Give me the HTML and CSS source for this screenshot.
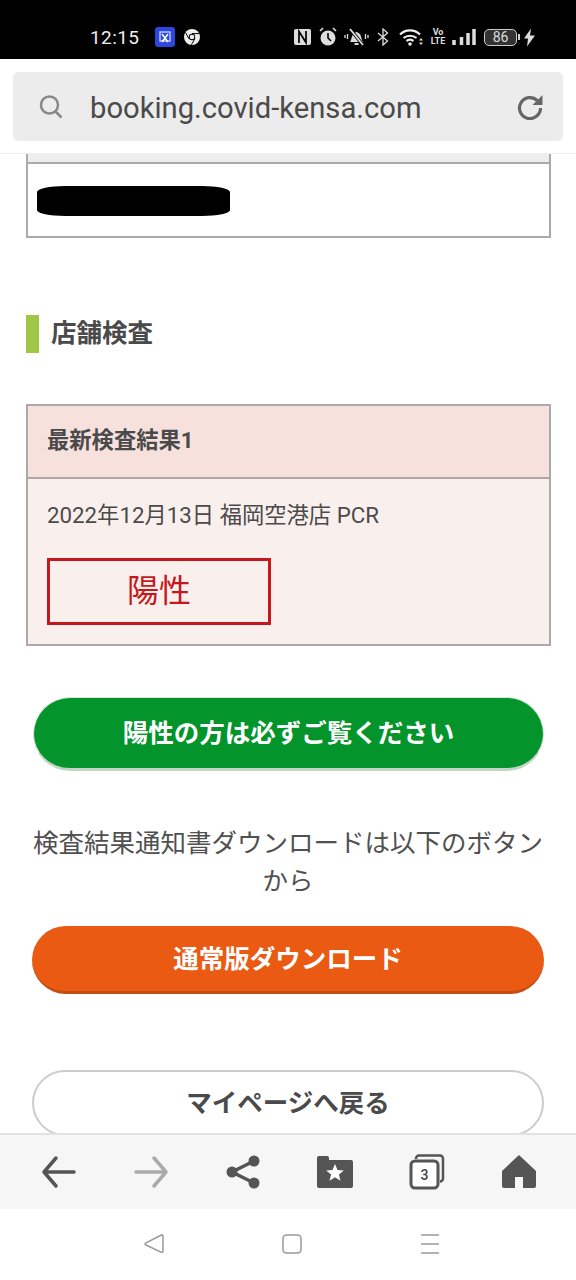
FILE: index.html
```
<!DOCTYPE html>
<html lang="ja">
<head>
<meta charset="utf-8">
<title>booking.covid-kensa.com</title>
<link rel="stylesheet" href="styles.css">
</head>
<body>
<div class="phone">
  <header class="status">
    <div class="status-left">
      <span class="clock">12:15</span>
      <svg class="app-icon" width="20" height="20" viewBox="0 0 20 20"><rect width="20" height="20" rx="3" fill="#2b47e0"/><rect x="5" y="5" width="10" height="9" fill="none" stroke="#cdd5ff" stroke-width="1.300"/><path d="M7 15l6-8M13 15L7 7" stroke="#fff" stroke-width="1.500" fill="none"/></svg>
      <svg class="chrome-icon" width="16" height="16" viewBox="0 0 16 16"><circle cx="8" cy="8" r="8" fill="#eee"/><circle cx="8" cy="8" r="3.200" fill="#000"/><circle cx="8" cy="8" r="2.300" fill="#eee"/><path d="M8 4.600h7M5 9.800L1.600 3.600M10.900 9.600L7.400 15.800" stroke="#000" stroke-width="1"/></svg>
    </div>
    <div class="status-right">
      <svg width="17" height="18" viewBox="0 0 17 18"><rect x="0" y="1" width="17" height="16" rx="2" fill="#ddd"/><path d="M5 15V3.500l7 11V3" fill="none" stroke="#000" stroke-width="1.700"/></svg>
      <svg width="18" height="20" viewBox="0 0 18 20"><circle cx="9" cy="11" r="7.500" fill="#ddd"/><path d="M9 6v5l3 3" fill="none" stroke="#000" stroke-width="1.600"/><path d="M1 4l3-3M17 4l-3-3" stroke="#ddd" stroke-width="1.600"/></svg>
      <svg class="ic-bell" width="25" height="20" viewBox="0 0 25 20"><path d="M6 15c2-2 1-9 6.500-10 5.500 1 4.500 8 6.500 10z" fill="#ddd"/><path d="M10.500 17h4" stroke="#ddd" stroke-width="2"/><path d="M6 2l13 16" stroke="#000" stroke-width="3.500"/><path d="M6 2l13 16" stroke="#ddd" stroke-width="1.800"/><path d="M1 8v3M3.500 7v5M21.500 7v5M24 8v3" stroke="#ddd" stroke-width="1.300"/></svg>
      <svg width="12" height="18" viewBox="0 0 12 18"><path d="M1 5l9.500 8L6 17V1l4.500 4L1 13" fill="none" stroke="#ddd" stroke-width="1.300"/></svg>
      <svg class="ic-wifi" width="25" height="18" viewBox="0 0 25 18"><path d="M1 6.500C6.500 1 15.500 1 21 6.500M4.500 10c3.500-3 9.500-3 13 0M7.500 13c2-1.500 5-1.500 7 0" fill="none" stroke="#eee" stroke-width="2.200"/><circle cx="11" cy="16" r="1.800" fill="#eee"/><path d="M22 10l-2 2.500h4zM22 17l-2-2.500h4z" fill="#ddd"/></svg>
      <span class="volte">Vo<br>LTE</span>
      <svg width="24" height="16" viewBox="0 0 24 16"><path d="M2 16v-5M9.500 16V8M16 16V4M22 16V0" stroke="#ddd" stroke-width="3.500"/></svg>
      <span class="battery"><span class="battery-level">86</span></span>
      <svg class="bolt" width="11" height="19" viewBox="0 0 11 18"><path d="M7 0L0 10h4l-1 8 8-11H6z" fill="#ddd"/></svg>
    </div>
  </header>

  <div class="address">
    <div class="url-pill">
      <svg width="26" height="26" viewBox="0 0 26 26"><circle cx="11.500" cy="11" r="8.500" fill="none" stroke="#888" stroke-width="2.500"/><path d="M17.500 17.500l6 6" stroke="#888" stroke-width="2.500"/></svg>
      <span class="url">booking.covid-kensa.com</span>
      <svg class="reload" width="26" height="26" viewBox="0 0 26 26"><path d="M23.500 14a10.500 10.500 0 1 1-3.200-7.500" fill="none" stroke="#666" stroke-width="3.200"/><path d="M25.500 1v10h-10z" fill="#666"/></svg>
    </div>
  </div>

  <main class="content">
    <div class="info-table">
      <div class="info-head"></div>
      <div class="info-cell"><div class="redaction"></div></div>
    </div>

    <h2 class="section-title">店舗検査</h2>

    <section class="result">
      <h3 class="result-head">最新検査結果1</h3>
      <div class="result-body">
        <p class="result-date">2022年12月13日 福岡空港店 PCR</p>
        <div class="result-badge">陽性</div>
      </div>
    </section>

    <a class="btn btn-green">陽性の方は必ずご覧ください</a>
    <p class="note">検査結果通知書ダウンロードは以下のボタンから</p>
    <a class="btn btn-orange">通常版ダウンロード</a>
    <a class="btn btn-white">マイページへ戻る</a>
  </main>

  <nav class="toolbar">
    <svg width="36" height="36" viewBox="0 0 36 36"><path d="M33 18H4M15 4L3 18l12 14" fill="none" stroke="#555" stroke-width="3.500" stroke-linecap="round" stroke-linejoin="round"/></svg>
    <svg width="36" height="36" viewBox="0 0 36 36"><path d="M3 18h29M21 4l12 14-12 14" fill="none" stroke="#aaa" stroke-width="3.500" stroke-linecap="round" stroke-linejoin="round"/></svg>
    <svg width="36" height="36" viewBox="0 0 36 36"><path d="M29 7L7 18l22 11" fill="none" stroke="#555" stroke-width="3.500"/><circle cx="29" cy="7" r="5.500" fill="#555"/><circle cx="7" cy="18" r="5.500" fill="#555"/><circle cx="29" cy="29" r="5.500" fill="#555"/></svg>
    <svg width="36" height="36" viewBox="0 0 36 36"><path d="M0 4a2 2 0 0 1 2-2h8a2 2 0 0 1 2 2v2h22a2 2 0 0 1 2 2v24a2 2 0 0 1-2 2H2a2 2 0 0 1-2-2z" fill="#555"/><path d="M18 10l2.500 6 6.300.4-4.900 4.100 1.600 6.200-5.500-3.400-5.500 3.400 1.600-6.200-4.900-4.100 6.300-.4z" fill="#fff"/></svg>
    <svg class="tabs-icon" width="36" height="36" viewBox="0 0 36 36"><rect x="2" y="7" width="27" height="27" rx="4" fill="#fff" stroke="#555" stroke-width="3"/><path d="M7 5V4.500a3 3 0 0 1 3-3h21a3 3 0 0 1 3 3v20a3 3 0 0 1-3 3" fill="none" stroke="#555" stroke-width="2.500"/><text x="15.500" y="26" class="tabs-count">3</text></svg>
    <svg width="36" height="36" viewBox="0 0 36 36"><path d="M18 1L1 17v15a2 2 0 0 0 2 2h11V23h8v11h11a2 2 0 0 0 2-2V17z" fill="#555"/></svg>
  </nav>

  <footer class="sysnav">
    <svg width="22" height="22" viewBox="0 0 22 22"><path d="M20 2.500v16a1 1 0 0 1-1.500.8L2.500 11.800a1 1 0 0 1 0-1.600L18.500 2a1 1 0 0 1 1.500.5z" fill="none" stroke="#999" stroke-width="1.500"/></svg>
    <svg width="22" height="22" viewBox="0 0 22 22"><rect x="2" y="2" width="18" height="18" rx="3.500" fill="none" stroke="#999" stroke-width="1.500"/></svg>
    <svg width="22" height="22" viewBox="0 0 22 22"><path d="M2 2h18M2 11h18M2 20h18" stroke="#999" stroke-width="1.500"/></svg>
  </footer>
</div>
</body>
</html>
```
FILE: styles.css
```
* { box-sizing: border-box; }
html, body { margin: 0; padding: 0; background: #fff; }
body { font-family: Roboto, "Noto Sans CJK JP", sans-serif; color: #4a4a4a; }

.phone { width: 576px; height: 1280px; display: flex; flex-direction: column; overflow: hidden; }

.status { flex: 0 0 59px; background: #000; color: #eee; display: flex; justify-content: space-between; align-items: center; padding: 15px 41px 0 90px; }
.status-left { display: flex; align-items: center; }
.clock { font-size: 19px; letter-spacing: .4px; width: 65px; }
.app-icon { margin-right: 9px; }
.status-right { display: flex; align-items: center; gap: 8px; }
.ic-bell { margin-left: -1px; }
.ic-wifi { margin-left: 2px; }
.volte { font-size: 9px; line-height: 9px; font-weight: 700; color: #ddd; text-align: center; width: 12px; display: flex; justify-content: center; flex-wrap: wrap; }
.battery { position: relative; width: 33px; height: 17px; border: 1.500px solid #ccc; border-radius: 5px; background: #333; margin-right: 2px; display: flex; align-items: center; justify-content: center; }
.battery::after { content: ""; position: absolute; right: -4px; top: 4px; width: 2px; height: 6px; background: #ccc; }
.battery-level { font-size: 14px; color: #ddd; }
.bolt { margin-left: -3px; }

.address { flex: 0 0 95px; padding: 13px 13px 0; border-bottom: 1px solid #eee; }
.url-pill { height: 69px; background: #ececec; border-radius: 6px; display: flex; align-items: center; padding: 0 20px 0 25px; }
.url { flex: 1; font-size: 29.200px; color: #4a4a4a; margin-left: 26px; padding-top: 3px; }

.content { flex: 1 1 0; min-height: 0; overflow: hidden; padding: 0 26px; }

.info-table { border: 2px solid #aaa; border-top: 0; width: 525px; }
.info-head { height: 10px; background: #eee; border-bottom: 2px solid #aaa; }
.info-cell { height: 72px; padding: 22px 9px 0; }
.redaction { width: 193px; height: 30px; background: #000; border-radius: 28px / 6px; }

.section-title { margin: 77px 0 0; height: 38px; border-left: 13px solid #a0c648; padding-left: 12px; font-size: 25.500px; line-height: 36px; font-weight: 700; color: #4a4a4a; }

.result { margin-top: 51px; width: 525px; border: 2px solid #aaa; background: #f9f0ee; }
.result-head { margin: 0; height: 73px; background: #f6e1dd; border-bottom: 2px solid #b0a6a4; padding: 0 19px; font-size: 22.300px; line-height: 69px; font-weight: 700; color: #4a4a4a; }
.result-body { padding: 20px 19px 0; height: 165px; }
.result-date { margin: 0; font-size: 22.300px; line-height: 32px; color: #4a4a4a; }
.result-badge { margin-top: 27px; width: 224px; height: 67px; border: 3px solid #c4181c; color: #c4181c; font-size: 32px; line-height: 60px; text-align: center; }

.btn { display: block; text-align: center; font-weight: 700; border-radius: 37px; white-space: nowrap; }
.btn-green { margin: 51px 0 0 7px; width: 511px; height: 74px; background: #03942b; border: 1px solid #d8e8d8; border-bottom: 3px solid #c3d6c6; color: #fff; font-size: 25.500px; line-height: 71px; }
.note { margin: 53px 0 0; font-size: 25.500px; line-height: 38px; text-align: center; color: #505050; }
.btn-orange { margin: 26px 0 0 6px; width: 512px; height: 68px; background: #ea5a12; border-bottom: 3px solid #c44d14; color: #fff; font-size: 25.500px; line-height: 67px; }
.btn-white { margin: 76px 0 0 6px; width: 512px; height: 66px; background: #fff; border: 2px solid #ccc; color: #4a4a4a; font-size: 25.500px; line-height: 63px; }

.toolbar { flex: 0 0 76px; background: #f6f6f6; border-top: 2px solid #e2e2e2; display: flex; justify-content: space-between; align-items: center; padding: 0 39px 0 41px; }
.toolbar svg { display: block; }
.tabs-icon { overflow: visible; }
.tabs-count { font: 500 14px Roboto, sans-serif; fill: #444; text-anchor: middle; }

.sysnav { flex: 0 0 71px; display: flex; justify-content: center; gap: 116px; padding: 24px 0 0 7px; }
```
